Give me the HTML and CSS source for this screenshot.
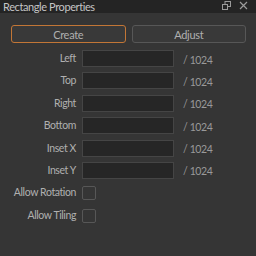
FILE: index.html
```html
<!DOCTYPE html>
<html lang="en">
<head>
    <meta charset="UTF-8">
    <title>Rectangle Properties</title>
    <link rel="stylesheet" href="styles.css">
</head>
<body>
    <div class="panel">
        <div class="titlebar">
            <span class="title">Rectangle Properties</span>
            <div class="title-icons">
                <svg width="9" height="9" viewBox="0 0 9 9">
                    <rect x="3" y="0.5" width="5.5" height="5" fill="none" stroke="#9a9a9a" stroke-width="1"/>
                    <rect x="0.5" y="3.5" width="5" height="5" fill="#242424" stroke="#9a9a9a" stroke-width="1"/>
                </svg>
                <svg width="9" height="9" viewBox="0 0 9 9">
                    <path d="M1 1 L8 8 M8 1 L1 8" stroke="#9a9a9a" stroke-width="1.2"/>
                </svg>
            </div>
        </div>

        <div class="mode-buttons">
            <button class="mode active">Create</button>
            <button class="mode">Adjust</button>
        </div>

        <div class="fields">
            <label class="field-label">Left</label>
            <input type="text" class="field-input">
            <span class="suffix">/ 1024</span>

            <label class="field-label">Top</label>
            <input type="text" class="field-input">
            <span class="suffix">/ 1024</span>

            <label class="field-label">Right</label>
            <input type="text" class="field-input">
            <span class="suffix">/ 1024</span>

            <label class="field-label">Bottom</label>
            <input type="text" class="field-input">
            <span class="suffix">/ 1024</span>

            <label class="field-label">Inset X</label>
            <input type="text" class="field-input">
            <span class="suffix">/ 1024</span>

            <label class="field-label">Inset Y</label>
            <input type="text" class="field-input">
            <span class="suffix">/ 1024</span>

            <label class="field-label">Allow Rotation</label>
            <span class="check"></span>
            <span></span>

            <label class="field-label">Allow Tiling</label>
            <span class="check"></span>
            <span></span>
        </div>
    </div>
</body>
</html>
```

FILE: styles.css
```css
body {
    margin: 0;
    background-color: #353535;
    font-family: "Lato", "Noto Sans", sans-serif;
    font-size: 10.5px;
    letter-spacing: -0.4px;
    color: #b0b0b0;
}

.panel {
    width: 256px;
    height: 256px;
    background-color: #353535;
}

.titlebar {
    height: 13px;
    background-color: #242424;
    display: flex;
    align-items: center;
    justify-content: space-between;
    padding: 0 8px 0 3px;
}

.title {
    font-size: 11px;
    color: #c4c4c4;
    line-height: 13px;
}

.title-icons {
    display: flex;
    gap: 8px;
    margin-top: -2px;
}

.mode-buttons {
    display: flex;
    gap: 6px;
    padding: 12px 10px 0 11px;
}

.mode {
    width: 115px;
    height: 18px;
    padding: 0;
    background-color: #393939;
    border: 1px solid #575757;
    border-radius: 3px;
    color: #b0b0b0;
    font-family: inherit;
    font-size: 11px;
    letter-spacing: -0.3px;
}

.mode.active {
    border-color: #c27636;
}

.fields {
    display: grid;
    grid-template-columns: 65px 92px auto;
    column-gap: 6px;
    row-gap: 5.4px;
    grid-auto-rows: 17px;
    padding: 7px 0 0 11px;
    align-items: center;
}

.field-label {
    text-align: right;
    line-height: 17px;
    white-space: nowrap;
}

.field-input {
    height: 17px;
    box-sizing: border-box;
    background-color: #262626;
    border: 1px solid #454545;
    padding: 0;
    margin: 0;
}

.suffix {
    padding-left: 3px;
    color: #999999;
    margin-top: 2px;
}

.check {
    width: 14px;
    height: 14px;
    box-sizing: border-box;
    border: 1px solid #575757;
    border-radius: 2px;
    background-color: #353535;
    margin-top: 1px;
}
```
